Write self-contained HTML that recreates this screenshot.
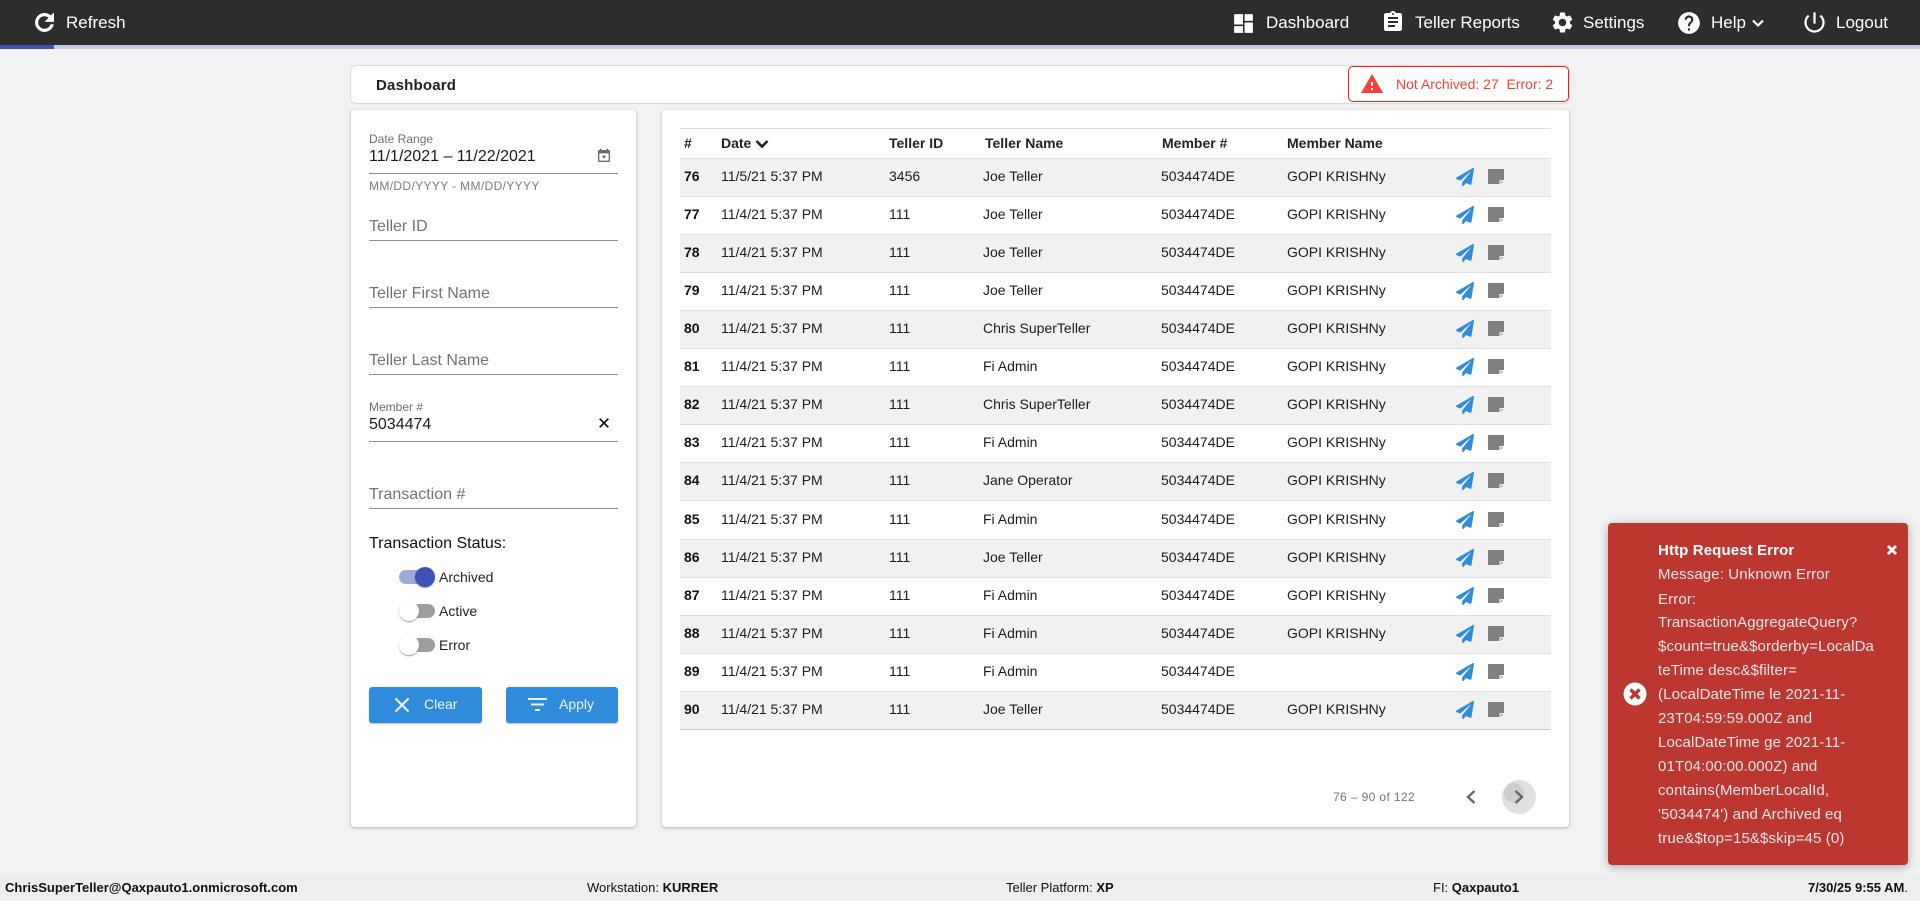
<!DOCTYPE html>
<html lang="en"><head><meta charset="utf-8"><title>Dashboard</title>
<style>
*{box-sizing:border-box}
html,body{margin:0;padding:0;width:1920px;height:901px;overflow:hidden;background:#f2f2f2;font-family:"Liberation Sans",Arial,sans-serif;color:#212121}
.a{position:absolute;white-space:nowrap}
svg{display:block;overflow:visible}
.nav{color:#fff;font-size:17px;line-height:20px;top:12px}
.card{position:absolute;background:#fff;border-radius:4px;box-shadow:0 1px 3px rgba(0,0,0,.28)}
.ul{position:absolute;left:369px;width:249px;height:1px;background:#8f8f8f}
.ph{left:369px;font-size:16px;line-height:20px;color:#6f7378}
.lab{left:369px;font-size:12px;line-height:14px;color:#6f6f6f}
.val{left:369px;font-size:16px;line-height:20px;color:#1a1a1a}
.btn{position:absolute;top:687px;height:36px;background:#2f8cdc;border-radius:3px;box-shadow:0 1px 1px rgba(0,0,0,.25)}
.sw{position:absolute;left:399px;width:36px;height:14px;border-radius:7px;background:#9e9e9e}
.th{position:absolute;width:20px;height:20px;border-radius:50%;background:#fff;top:-3px;left:0;box-shadow:0 2px 1px -1px rgba(0,0,0,.2),0 1px 1px rgba(0,0,0,.14),0 1px 3px rgba(0,0,0,.12)}
.swl{left:439px;font-size:14px;line-height:16px;color:#222}
.r{position:absolute;left:680px;width:871px;height:38px;border-bottom:1px solid #dfe0e6;font-size:14px;line-height:35px;color:#1c1c1c}
.r.o{background:#f1f1f1}
.r span{position:absolute;top:0;white-space:nowrap}
.r b{position:absolute;left:4px;top:0;color:#111}
.c1{left:41px}.c2{left:209px}.c3{left:303px}.c4{left:481px}.c5{left:607px}
.r svg{position:absolute}
.p{left:776px;top:9px;width:18px;height:18px}
.n{left:808px;top:10px;width:16px;height:15px}
.h{position:absolute;top:129px;font-size:14px;line-height:29px;font-weight:bold;color:#222;white-space:nowrap}
.t{position:absolute;left:1658px;font-size:15px;line-height:24px;color:#f5e6e5;white-space:nowrap;letter-spacing:.12px}
.f{position:absolute;top:880px;font-size:13px;line-height:16px;color:#111;white-space:nowrap}
</style></head><body>
<svg width="0" height="0" style="position:absolute">
<defs>
<symbol id="pl" viewBox="0 0 512 512"><path fill="#2f8cdc" d="M476 3.2L12.5 270.6c-18.1 10.4-15.8 35.6 2.2 43.2L121 358.4l287.3-253.2c5.5-4.9 13.3 2.6 8.6 8.3L176 407v80.5c0 23.6 28.5 32.9 42.5 15.8L282 426l124.6 52.2c14.2 6 30.4-2.9 33-18.2l72-432C515 7.8 493.3-6.8 476 3.2z"/></symbol>
<symbol id="nt" viewBox="0 0 16 15"><path fill="#808080" d="M0 .5a.5.5 0 0 1 .5-.5h15a.5.5 0 0 1 .5.5v10.500h-4.500v4H.5a.5.5 0 0 1-.5-.5z"/><path fill="#e4e4ee" d="M12 11.500H16L12 15z"/><path fill="#808080" d="M13 12.500h2L13 14.500z"/></symbol>
</defs></svg>

<div class="a" style="left:0;top:0;width:1920px;height:45px;background:#2d2d2d"></div>
<div class="a" style="left:0;top:45px;width:1920px;height:4px;background:#c5cae9"></div>
<div class="a" style="left:0;top:45px;width:54px;height:4px;background:#3f51b5"></div>

<svg class="a" style="left:31px;top:9px" width="27" height="27" viewBox="0 0 24 24"><path fill="#fff" stroke="#fff" stroke-width=".8" d="M17.650 6.350C16.200 4.900 14.210 4 12 4c-4.420 0-7.990 3.580-7.990 8s3.570 8 7.990 8c3.730 0 6.840-2.550 7.730-6h-2.080c-.82 2.330-3.040 4-5.650 4-3.310 0-6-2.690-6-6s2.690-6 6-6c1.660 0 3.140.69 4.220 1.780L13 11h7V4l-2.350 2.350z"/></svg>
<div class="a nav" style="left:66px;top:13px">Refresh</div>

<svg class="a" style="left:1231px;top:11px" width="25" height="25" viewBox="0 0 24 24"><path fill="#fff" d="M3 13h8.500V3H3v10zm0 8h8.500v-6.500H3V21zm10 0h8V11h-8v10zm0-18v6.500h8V3h-8z"/></svg>
<div class="a nav" style="left:1266px;top:13px">Dashboard</div>
<svg class="a" style="left:1381px;top:10px" width="24" height="24" viewBox="0 0 24 24"><path fill="#fff" d="M19 3h-4.180C14.400 1.840 13.300 1 12 1c-1.300 0-2.400.84-2.820 2H5c-1.100 0-2 .9-2 2v14c0 1.100.9 2 2 2h14c1.100 0 2-.9 2-2V5c0-1.100-.9-2-2-2zm-7 0c.55 0 1 .45 1 1s-.45 1-1 1-1-.45-1-1 .45-1 1-1zm2 14H7v-2h7v2zm3-4H7v-2h10v2zm0-4H7V7h10v2z"/></svg>
<div class="a nav" style="left:1415px;top:13px">Teller Reports</div>
<svg class="a" style="left:1550px;top:10px" width="25" height="25" viewBox="0 0 24 24"><path fill="#fff" d="M19.140 12.940c.04-.3.06-.61.06-.94 0-.32-.02-.64-.07-.94l2.030-1.580c.18-.14.23-.41.12-.61l-1.920-3.320c-.12-.22-.37-.29-.59-.22l-2.390.96c-.5-.38-1.030-.7-1.620-.94l-.36-2.540c-.04-.24-.24-.41-.48-.41h-3.840c-.24 0-.43.17-.47.41l-.36 2.540c-.59.24-1.130.57-1.620.94l-2.390-.96c-.22-.08-.47 0-.59.22L2.740 8.870c-.12.21-.08.47.12.61l2.030 1.580c-.05.3-.09.63-.09.94s.02.64.07.94l-2.030 1.580c-.18.14-.23.41-.12.61l1.920 3.320c.12.22.37.29.59.22l2.390-.96c.5.38 1.030.7 1.620.94l.36 2.540c.05.24.24.41.48.41h3.840c.24 0 .44-.17.47-.41l.36-2.540c.59-.24 1.130-.56 1.620-.94l2.390.96c.22.08.47 0 .59-.22l1.920-3.320c.12-.22.07-.47-.12-.61l-2.010-1.580zM12 15.600c-1.980 0-3.600-1.620-3.600-3.600s1.620-3.600 3.600-3.600 3.600 1.620 3.600 3.600-1.620 3.600-3.600 3.600z"/></svg>
<div class="a nav" style="left:1583px;top:13px">Settings</div>
<svg class="a" style="left:1676px;top:10px" width="26" height="26" viewBox="0 0 24 24"><path fill="#fff" d="M12 2C6.480 2 2 6.480 2 12s4.480 10 10 10 10-4.480 10-10S17.520 2 12 2zm1 17h-2v-2h2v2zm2.070-7.750l-.9.92C13.450 12.900 13 13.500 13 15h-2v-.5c0-1.100.45-2.100 1.170-2.830l1.240-1.260c.37-.36.59-.86.59-1.410 0-1.100-.9-2-2-2s-2 .9-2 2H8c0-2.210 1.790-4 4-4s4 1.790 4 4c0 .88-.36 1.680-.93 2.250z"/></svg>
<div class="a nav" style="left:1711px;top:13px">Help</div>
<svg class="a" style="left:1752px;top:19px" width="12" height="9" viewBox="0 0 12 9"><path fill="none" stroke="#fff" stroke-width="2.200" d="M1 1.500l5 5 5-5"/></svg>
<svg class="a" style="left:1801px;top:9px" width="27" height="27" viewBox="0 0 24 24"><path fill="#fff" d="M13 3h-2v10h2V3zm4.830 2.170l-1.420 1.420C17.990 7.860 19 9.810 19 12c0 3.870-3.130 7-7 7s-7-3.130-7-7c0-2.190 1.010-4.140 2.580-5.420L6.170 5.170C4.230 6.820 3 9.260 3 12c0 4.970 4.030 9 9 9s9-4.030 9-9c0-2.740-1.230-5.180-3.170-6.830z"/></svg>
<div class="a nav" style="left:1836px;top:13px">Logout</div>

<div class="card" style="left:350px;top:65px;width:1220px;height:39px;border-radius:6px;border:1px solid #dcdcdc;box-shadow:none"></div>
<div class="a" style="left:376px;top:76px;font-size:15px;line-height:20px;font-weight:bold;color:#212121;letter-spacing:.2px">Dashboard</div>
<div class="a" style="left:1348px;top:66px;width:221px;height:36px;border:1px solid #f01d1d;border-radius:5px;background:#fff"></div>
<svg class="a" style="left:1361px;top:74px" width="22" height="19" viewBox="1 2 22 19"><path fill="#f44336" d="M1 21h22L12 2 1 21zm12-3h-2v-2h2v2zm0-4h-2v-4h2v4z"/></svg>
<div class="a" style="left:1396px;top:75px;font-size:14px;line-height:18px;color:#f44336">Not Archived: 27&nbsp; Error: 2</div>

<div class="card" style="left:351px;top:110px;width:285px;height:717px"></div>
<div class="card" style="left:662px;top:110px;width:907px;height:717px"></div>

<div class="a lab" style="top:132px">Date Range</div>
<div class="a val" style="top:147px">11/1/2021 – 11/22/2021</div>
<svg class="a" style="left:596px;top:148px" width="16" height="16" viewBox="0 0 24 24"><path fill="#6b6b6b" d="M19 3h-1V1h-2v2H8V1H6v2H5C3.890 3 3 3.900 3 5v14c0 1.100.89 2 2 2h14c1.100 0 2-.9 2-2V5c0-1.100-.9-2-2-2zm0 16H5V8h14v11zM10 11h4v4h-4z"/></svg>
<div class="ul" style="top:173px"></div>
<div class="a lab" style="top:179px;color:#7b7b7b;letter-spacing:.36px">MM/DD/YYYY - MM/DD/YYYY</div>
<div class="a ph" style="top:217px">Teller ID</div>
<div class="ul" style="top:240px"></div>
<div class="a ph" style="top:284px">Teller First Name</div>
<div class="ul" style="top:307px"></div>
<div class="a ph" style="top:351px">Teller Last Name</div>
<div class="ul" style="top:374px"></div>
<div class="a lab" style="top:400px">Member #</div>
<div class="a val" style="top:415px">5034474</div>
<svg class="a" style="left:596px;top:415px" width="16" height="16" viewBox="0 0 24 24"><path fill="#111" stroke="#111" stroke-width=".6" d="M19 6.410L17.590 5 12 10.590 6.410 5 5 6.410 10.590 12 5 17.590 6.410 19 12 13.410 17.590 19 19 17.590 13.410 12z"/></svg>
<div class="ul" style="top:441px"></div>
<div class="a ph" style="top:485px">Transaction #</div>
<div class="ul" style="top:508px"></div>

<div class="a" style="left:369px;top:534px;font-size:16px;line-height:20px;color:#111">Transaction Status:</div>
<div class="sw" style="top:570px;background:#9fa8da"><div class="th" style="left:16px;background:#3f51b5"></div></div>
<div class="a swl" style="top:569px">Archived</div>
<div class="sw" style="top:604px"><div class="th"></div></div>
<div class="a swl" style="top:603px">Active</div>
<div class="sw" style="top:638px"><div class="th"></div></div>
<div class="a swl" style="top:637px">Error</div>

<div class="btn" style="left:369px;width:113px"></div>
<svg class="a" style="left:394px;top:697px" width="16" height="16" viewBox="0 0 17 17"><path fill="none" stroke="#f1f1f1" stroke-width="2.200" d="M1.500 1.500l14 14M15.500 1.500l-14 14"/></svg>
<div class="a" style="left:424px;top:695px;font-size:14px;line-height:18px;color:#eef5fc">Clear</div>
<div class="btn" style="left:506px;width:112px"></div>
<svg class="a" style="left:528px;top:698px" width="19" height="14" viewBox="0 0 19 14"><path fill="#f1f1f1" d="M0 0h19v2H0zM3 5.500h13v2H3zM7 11h5v2H7z"/></svg>
<div class="a" style="left:559px;top:695px;font-size:14px;line-height:18px;color:#eef5fc">Apply</div>

<div class="a" style="left:680px;top:128px;width:871px;height:1px;background:#dfe0e6"></div>
<div class="a" style="left:680px;top:158px;width:871px;height:1px;background:#dfe0e6"></div>
<div class="h" style="left:684px">#</div>
<div class="h" style="left:721px">Date</div>
<svg class="a" style="left:755px;top:139px" width="14" height="10" viewBox="0 0 14 10"><path fill="none" stroke="#222" stroke-width="2.600" d="M1.500 2l5.500 5.500L12.500 2"/></svg>
<div class="h" style="left:889px">Teller ID</div>
<div class="h" style="left:985px">Teller Name</div>
<div class="h" style="left:1162px">Member #</div>
<div class="h" style="left:1287px">Member Name</div>

<div class="r o" style="top:159px"><b>76</b><span class="c1">11/5/21 5:37 PM</span><span class="c2">3456</span><span class="c3">Joe Teller</span><span class="c4">5034474DE</span><span class="c5">GOPI KRISHNy</span><svg class="p"><use href="#pl"/></svg><svg class="n"><use href="#nt"/></svg></div>
<div class="r" style="top:197px"><b>77</b><span class="c1">11/4/21 5:37 PM</span><span class="c2">111</span><span class="c3">Joe Teller</span><span class="c4">5034474DE</span><span class="c5">GOPI KRISHNy</span><svg class="p"><use href="#pl"/></svg><svg class="n"><use href="#nt"/></svg></div>
<div class="r o" style="top:235px"><b>78</b><span class="c1">11/4/21 5:37 PM</span><span class="c2">111</span><span class="c3">Joe Teller</span><span class="c4">5034474DE</span><span class="c5">GOPI KRISHNy</span><svg class="p"><use href="#pl"/></svg><svg class="n"><use href="#nt"/></svg></div>
<div class="r" style="top:273px"><b>79</b><span class="c1">11/4/21 5:37 PM</span><span class="c2">111</span><span class="c3">Joe Teller</span><span class="c4">5034474DE</span><span class="c5">GOPI KRISHNy</span><svg class="p"><use href="#pl"/></svg><svg class="n"><use href="#nt"/></svg></div>
<div class="r o" style="top:311px"><b>80</b><span class="c1">11/4/21 5:37 PM</span><span class="c2">111</span><span class="c3">Chris SuperTeller</span><span class="c4">5034474DE</span><span class="c5">GOPI KRISHNy</span><svg class="p"><use href="#pl"/></svg><svg class="n"><use href="#nt"/></svg></div>
<div class="r" style="top:349px"><b>81</b><span class="c1">11/4/21 5:37 PM</span><span class="c2">111</span><span class="c3">Fi Admin</span><span class="c4">5034474DE</span><span class="c5">GOPI KRISHNy</span><svg class="p"><use href="#pl"/></svg><svg class="n"><use href="#nt"/></svg></div>
<div class="r o" style="top:387px"><b>82</b><span class="c1">11/4/21 5:37 PM</span><span class="c2">111</span><span class="c3">Chris SuperTeller</span><span class="c4">5034474DE</span><span class="c5">GOPI KRISHNy</span><svg class="p"><use href="#pl"/></svg><svg class="n"><use href="#nt"/></svg></div>
<div class="r" style="top:425px"><b>83</b><span class="c1">11/4/21 5:37 PM</span><span class="c2">111</span><span class="c3">Fi Admin</span><span class="c4">5034474DE</span><span class="c5">GOPI KRISHNy</span><svg class="p"><use href="#pl"/></svg><svg class="n"><use href="#nt"/></svg></div>
<div class="r o" style="top:463px"><b>84</b><span class="c1">11/4/21 5:37 PM</span><span class="c2">111</span><span class="c3">Jane Operator</span><span class="c4">5034474DE</span><span class="c5">GOPI KRISHNy</span><svg class="p"><use href="#pl"/></svg><svg class="n"><use href="#nt"/></svg></div>
<div class="r" style="top:502px"><b>85</b><span class="c1">11/4/21 5:37 PM</span><span class="c2">111</span><span class="c3">Fi Admin</span><span class="c4">5034474DE</span><span class="c5">GOPI KRISHNy</span><svg class="p"><use href="#pl"/></svg><svg class="n"><use href="#nt"/></svg></div>
<div class="r o" style="top:540px"><b>86</b><span class="c1">11/4/21 5:37 PM</span><span class="c2">111</span><span class="c3">Joe Teller</span><span class="c4">5034474DE</span><span class="c5">GOPI KRISHNy</span><svg class="p"><use href="#pl"/></svg><svg class="n"><use href="#nt"/></svg></div>
<div class="r" style="top:578px"><b>87</b><span class="c1">11/4/21 5:37 PM</span><span class="c2">111</span><span class="c3">Fi Admin</span><span class="c4">5034474DE</span><span class="c5">GOPI KRISHNy</span><svg class="p"><use href="#pl"/></svg><svg class="n"><use href="#nt"/></svg></div>
<div class="r o" style="top:616px"><b>88</b><span class="c1">11/4/21 5:37 PM</span><span class="c2">111</span><span class="c3">Fi Admin</span><span class="c4">5034474DE</span><span class="c5">GOPI KRISHNy</span><svg class="p"><use href="#pl"/></svg><svg class="n"><use href="#nt"/></svg></div>
<div class="r" style="top:654px"><b>89</b><span class="c1">11/4/21 5:37 PM</span><span class="c2">111</span><span class="c3">Fi Admin</span><span class="c4">5034474DE</span><svg class="p"><use href="#pl"/></svg><svg class="n"><use href="#nt"/></svg></div>
<div class="r o" style="top:692px;border-bottom:1px solid #c9cad0"><b>90</b><span class="c1">11/4/21 5:37 PM</span><span class="c2">111</span><span class="c3">Joe Teller</span><span class="c4">5034474DE</span><span class="c5">GOPI KRISHNy</span><svg class="p"><use href="#pl"/></svg><svg class="n"><use href="#nt"/></svg></div>

<div class="a" style="left:1333px;top:790px;font-size:12px;line-height:14px;color:#757575;letter-spacing:.38px">76 – 90 of 122</div>
<svg class="a" style="left:1465px;top:789px" width="12" height="16" viewBox="0 0 12 16"><path fill="none" stroke="#666" stroke-width="2.400" d="M9.500 2L3 8l6.500 6"/></svg>
<div class="a" style="left:1502px;top:780px;width:34px;height:34px;border-radius:50%;background:#e0e0e0"></div>
<div class="a" style="left:1504px;top:783px;width:20px;height:20px;border-radius:50%;background:#cecece"></div>
<svg class="a" style="left:1513px;top:789px" width="12" height="16" viewBox="0 0 12 16"><path fill="none" stroke="#666" stroke-width="2.400" d="M2.500 2L9 8l-6.500 6"/></svg>

<div class="a" style="left:0;top:875px;width:1920px;height:26px;background:#eceef0"></div>
<div class="f" style="left:5px"><b>ChrisSuperTeller@Qaxpauto1.onmicrosoft.com</b></div>
<div class="f" style="left:587px">Workstation: <b>KURRER</b></div>
<div class="f" style="left:1006px">Teller Platform: <b>XP</b></div>
<div class="f" style="left:1433px">FI: <b>Qaxpauto1</b></div>
<div class="f" style="left:1808px"><b>7/30/25 9:55 AM</b>.</div>

<div class="a" style="left:1608px;top:523px;width:300px;height:342px;background:#bb3730;border-radius:4px;box-shadow:0 2px 10px rgba(0,0,0,.3)"></div>
<div class="t" style="top:539px;font-weight:bold;color:#fff">Http Request Error</div>
<svg class="a" style="left:1887px;top:545px" width="10" height="10" viewBox="0 0 10 10"><path fill="none" stroke="#fff" stroke-width="2.800" d="M1 1l8 8M9 1L1 9"/></svg>
<div class="t" style="top:563px">Message: Unknown Error</div>
<div class="t" style="top:588px">Error:</div>
<div class="t" style="top:611px">TransactionAggregateQuery?</div>
<div class="t" style="top:635px">$count=true&amp;$orderby=LocalDa</div>
<div class="t" style="top:659px">teTime desc&amp;$filter=</div>
<div class="t" style="top:683px">(LocalDateTime le 2021-11-</div>
<div class="t" style="top:707px">23T04:59:59.000Z and</div>
<div class="t" style="top:731px">LocalDateTime ge 2021-11-</div>
<div class="t" style="top:755px">01T04:00:00.000Z) and</div>
<div class="t" style="top:779px">contains(MemberLocalId,</div>
<div class="t" style="top:803px">'5034474') and Archived eq</div>
<div class="t" style="top:827px">true&amp;$top=15&amp;$skip=45 (0)</div>
<svg class="a" style="left:1623px;top:682px" width="24" height="24" viewBox="0 0 24 24"><circle cx="12" cy="12" r="11.500" fill="#fff"/><path fill="none" stroke="#bb3730" stroke-width="3.400" d="M7.500 7.500l9 9M16.500 7.500l-9 9"/></svg>
</body></html>
